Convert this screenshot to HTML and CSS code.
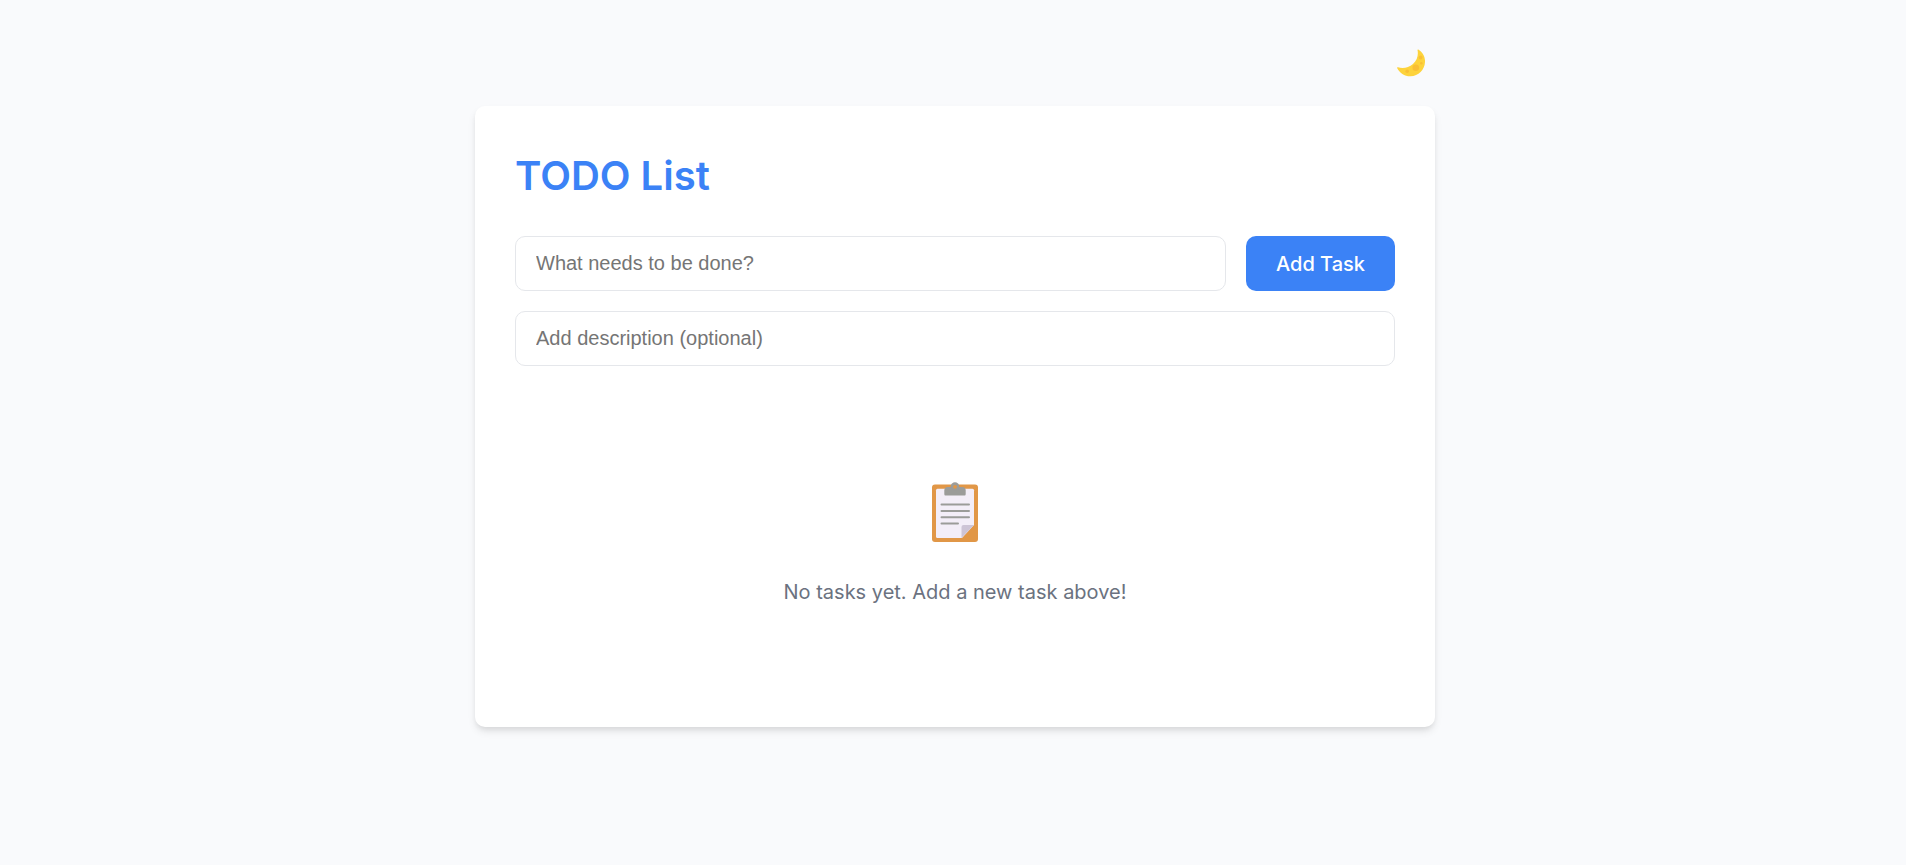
FILE: index.html
```html
<!DOCTYPE html>
<html lang="en">
<head>
<meta charset="utf-8">
<meta name="viewport" content="width=device-width, initial-scale=1">
<title>TODO List</title>
<link rel="stylesheet" href="styles.css">
</head>
<body>
<div class="container">
  <header class="toolbar">
    <button class="theme-toggle" type="button" aria-label="Toggle dark mode">
      <svg class="moon" viewBox="0 0 28 28" aria-hidden="true">
        <path fill="#fdd33c" d="M21.300 0.500C25.500 3 28.300 7.600 28 13C27.600 21 21.500 27.100 13.500 27.300C7.500 27.400 2.500 23.800 0.100 19C-.1 18.400.4 18 1 18.300C5.500 20 11.500 19 16 15C20.400 11 21.500 5.500 20.500 1.100C20.400.5 20.800.2 21.300.5Z"/>
        <g fill="#f9bf36"><circle cx="18.800" cy="18.700" r="3.300"/><circle cx="10.200" cy="22.300" r="1.800"/><circle cx="23.600" cy="8.500" r="1.900"/><circle cx="24.300" cy="14.300" r="1.200"/></g>
      </svg>
    </button>
  </header>
  <main class="card">
    <h1 class="title">TODO List</h1>
    <form class="task-form">
      <div class="form-row">
        <input class="field" type="text" placeholder="What needs to be done?" aria-label="Task">
        <button class="add-button" type="button">Add Task</button>
      </div>
      <input class="field" type="text" placeholder="Add description (optional)" aria-label="Description">
    </form>
    <section class="empty-state">
      <svg class="clipboard" viewBox="0 0 48 60" aria-hidden="true">
        <rect x="1" y="2.500" width="46" height="57.500" rx="3" fill="#e19747"/>
        <path fill="#f3eef8" d="M6.500 6.800h35q1.500 0 1.500 1.500V43L31 56H6.500q-1.500 0-1.500-1.500V8.300q0-1.500 1.500-1.500Z"/>
        <path fill="#cdc4d6" d="M43 43L30.500 56V45q0-2 2-2Z"/>
        <path fill="#9b9c99" d="M13.300 12V8.500q0-3.500 3.500-3.500h14.400q3.500 0 3.500 3.500V12q0 1.500-1 1.500H14.300q-1 0-1-1.500Z"/>
        <circle cx="24" cy="4.500" r="4.200" fill="#9b9c99"/>
        <circle cx="24" cy="4.800" r="1.900" fill="#e19747"/>
        <path fill="none" stroke="#9b9c99" stroke-width="2" stroke-linecap="round" d="M10.500 22.500h27.500M10.500 29h27.500M10.500 35.200h27.500M10.500 41.500h16.500"/>
      </svg>
      <p class="empty-text">No tasks yet. Add a new task above!</p>
    </section>
  </main>
</div>
</body>
</html>
```
FILE: styles.css
```css
* {
  box-sizing: border-box;
}

body {
  margin: 0;
  padding: 40px 20px 40px 24px;
  background: #f9fafc;
  color: #6b7280;
  font: 20px/30px Inter, sans-serif;
}

.container {
  max-width: 960px;
  margin: 0 auto;
}

.toolbar {
  display: flex;
  justify-content: flex-end;
  margin-bottom: 20px;
}

.theme-toggle {
  display: flex;
  padding: 9px 10px;
  border: 0;
  background: none;
  cursor: pointer;
}

.moon {
  width: 28px;
  height: 28px;
}

.card {
  padding: 40px;
  border-radius: 10px;
  background: #fff;
  box-shadow: 0 5px 8px -1px rgba(0, 0, 0, 0.1), 0 3px 5px -1px rgba(0, 0, 0, 0.06);
}

.title {
  margin: 0 0 30px;
  color: #3b82f6;
  font-size: 40px;
  font-weight: 600;
  line-height: 60px;
}

.task-form {
  display: flex;
  flex-direction: column;
  gap: 20px;
}

.form-row {
  display: flex;
  gap: 20px;
}

.field {
  flex: 1;
  min-width: 0;
  padding: 15px 20px;
  border: 1px solid #e5e7eb;
  border-radius: 10px;
  background: #fff;
  color: #1f2937;
  font: 20px/23px "Liberation Sans", Arial, sans-serif;
}

.field::placeholder {
  color: #757575;
}

.add-button {
  padding: 0 30px;
  border: 0;
  border-radius: 10px;
  background: #3b82f6;
  color: #fff;
  font: 500 20px/30px Inter, sans-serif;
  cursor: pointer;
}

.empty-state {
  display: flex;
  flex-direction: column;
  align-items: center;
  gap: 35px;
  padding: 116px 20px 80px;
}

.clipboard {
  width: 48px;
  height: 60px;
}

.empty-text {
  margin: 0;
}
```
